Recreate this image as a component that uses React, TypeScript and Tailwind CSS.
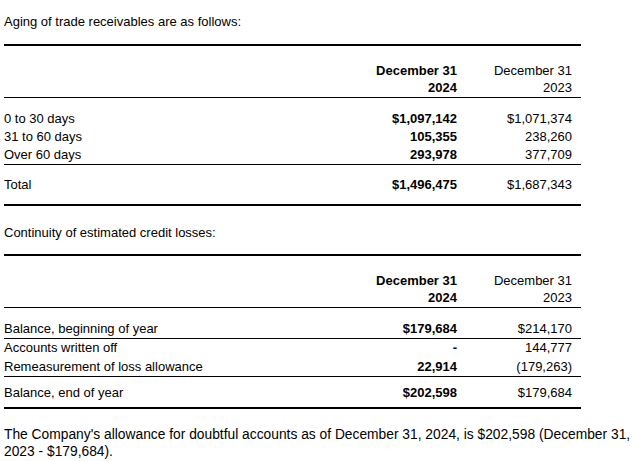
const font = { fontFamily: '"Liberation Sans", Arial, sans-serif' };

function Header() {
  return (
    <div className="grid grid-cols-[1fr_120px_115px] pr-[9px] pt-[16px] pb-[1px] leading-[17px] text-[13px]">
      <div />
      <div className="text-right font-bold">
        December 31
        <br />
        2024
      </div>
      <div className="text-right">
        December 31
        <br />
        2023
      </div>
    </div>
  );
}

function Line({ label, a, b, className }: { label: string; a: string; b: string; className?: string }) {
  return (
    <div className={`grid grid-cols-[1fr_120px_115px] pr-[9px] items-center leading-[18px] text-[13px] ${className ?? ""}`}>
      <div>{label}</div>
      <div className="text-right font-bold">{a}</div>
      <div className="text-right">{b}</div>
    </div>
  );
}

const Thick = () => <div className="h-[2px] bg-black" />;
const Thin = () => <div className="h-px bg-black" />;

export default function App() {
  return (
    <div className="bg-white text-black w-[639px] h-[461px] overflow-hidden" style={font}>
      <div className="w-[581px] pl-[4px]">
        <p className="pt-[13px] leading-[17px] text-[13px]">Aging of trade receivables are as follows:</p>
        <div className="mt-[14px]">
          <Thick />
          <Header />
          <Thin />
          <div className="pt-[12px]">
            <Line label="0 to 30 days" a="$1,097,142" b="$1,071,374" />
            <Line label="31 to 60 days" a="105,355" b="238,260" />
            <Line label="Over 60 days" a="293,978" b="377,709" />
          </div>
          <Thin />
          <Line label="Total" a="$1,496,475" b="$1,687,343" className="pt-[11px] pb-[10px]" />
          <Thick />
        </div>

        <p className="pt-[18px] leading-[17px] text-[13px]">Continuity of estimated credit losses:</p>
        <div className="mt-[13px]">
          <Thick />
          <Header />
          <Thin />
          <Line label="Balance, beginning of year" a="$179,684" b="$214,170" className="pt-[12px]" />
          <Thin />
          <Line label="Accounts written off" a="-" b="144,777" />
          <Line label="Remeasurement of loss allowance" a="22,914" b="(179,263)" className="h-[19px]" />
          <Thin />
          <Line label="Balance, end of year" a="$202,598" b="$179,684" className="pt-[7px] pb-[5px]" />
          <Thick />
        </div>
      </div>
      <p className="mt-[17px] pl-[4px] pr-[2px] leading-[17px] text-[13.8px]">
        The Company's allowance for doubtful accounts as of December 31, 2024, is $202,598 (December 31, 2023 - $179,684).
      </p>
    </div>
  );
}
